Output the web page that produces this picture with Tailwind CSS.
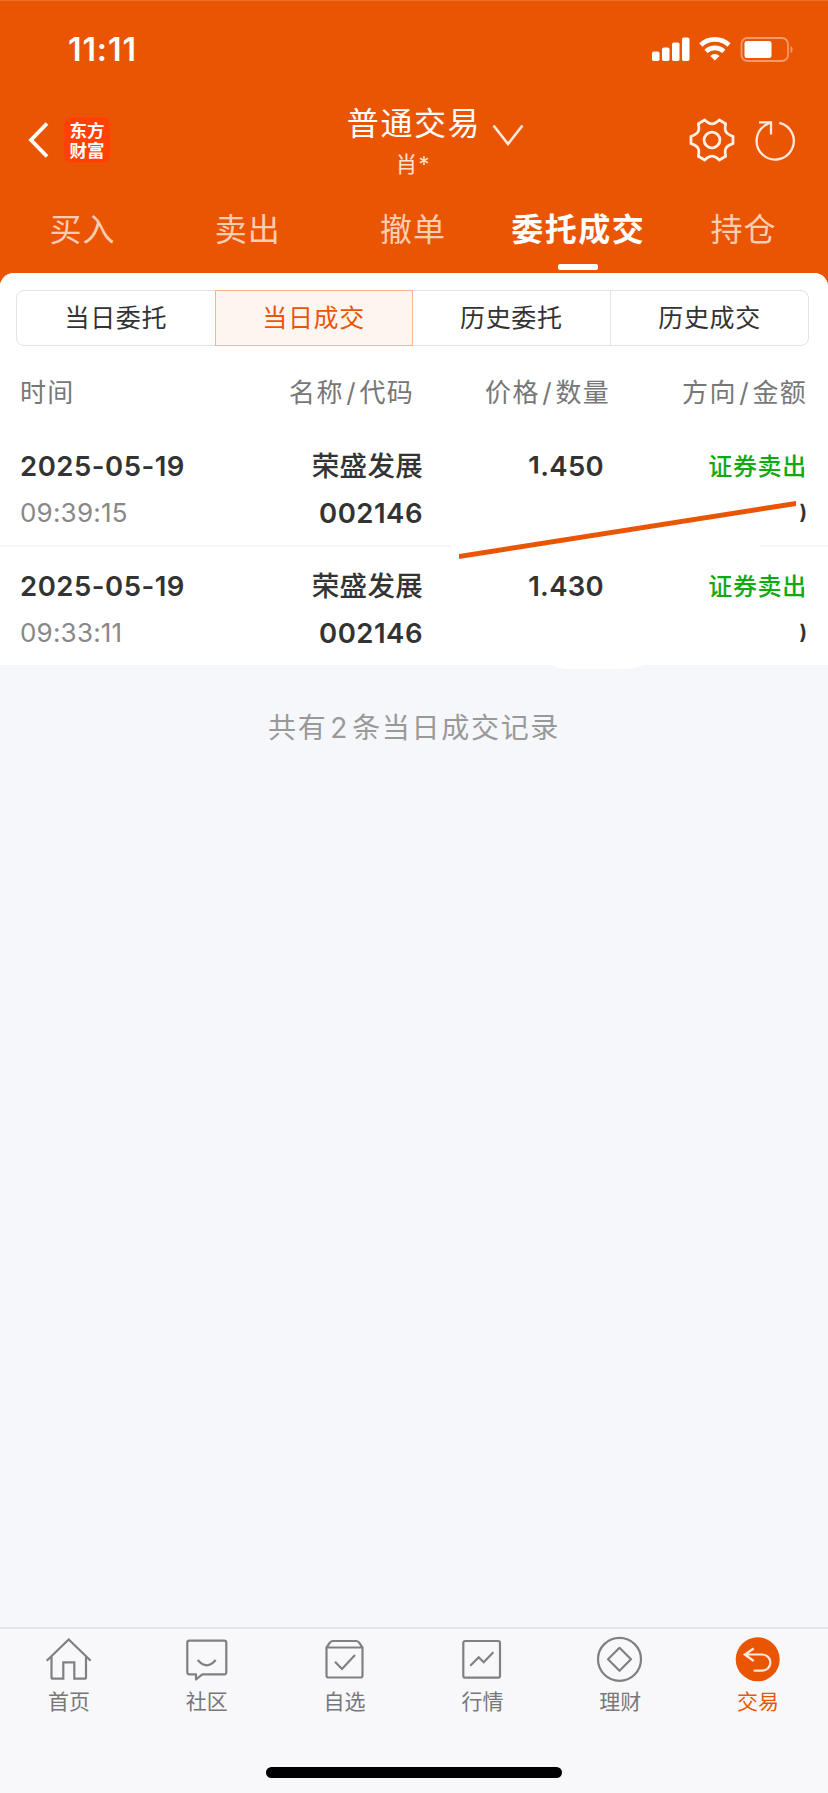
<!DOCTYPE html>
<html lang="zh-CN">
<head>
    <meta charset="UTF-8">
    <meta name="viewport" content="width=device-width, initial-scale=1.0">
    <title>普通交易 - 当日成交</title>
    <script src="https://cdn.jsdelivr.net/npm/@tailwindcss/browser@4"></script>
</head>
<body class="bg-[#ea5504] font-['Inter','Noto_Sans_CJK_SC',sans-serif]">
    <div id="app" class="relative flex flex-col w-[828px] h-[1793px] overflow-hidden leading-none whitespace-nowrap">

        <!-- Status bar -->
        <div class="flex items-center justify-between h-[98px] pl-[68px] pr-[34px] text-white shrink-0 border-t border-[#ee6e2a]">
            <span class="text-[32px] font-semibold tracking-[0.9px]">11:11</span>
            <svg class="w-[142px] h-[26px]" viewBox="0 0 142 26" fill="#fff">
                <rect x="0" y="14.500" width="7.500" height="9.500" rx="1.800"/>
                <rect x="10" y="10.500" width="7.500" height="13.500" rx="1.800"/>
                <rect x="20" y="5.500" width="7.500" height="18.500" rx="1.800"/>
                <rect x="30" y="0.500" width="7.500" height="23.500" rx="1.800"/>
                <g fill="none" stroke="#fff" stroke-width="4.600">
                    <path d="M48.800 8a20.500 20.500 0 0 1 28.200 0"/>
                    <path d="M54 14.400a13 13 0 0 1 17.800 0"/>
                </g>
                <path d="M58.300 19a6.500 6.500 0 0 1 9.200 0l-4.600 4.600z"/>
                <rect x="89.500" y="1" width="46.500" height="23" rx="6" fill="none" stroke="#f49a68" stroke-width="1.800"/>
                <rect x="92.500" y="4" width="27" height="17" rx="2.500"/>
                <path d="M138.500 9c2.800 1 2.800 6 0 7z" fill="#f49a68"/>
            </svg>
        </div>

        <!-- Title bar -->
        <div class="grid grid-cols-3 h-[92px] pl-[28px] pr-[30px] text-white shrink-0">
            <div class="flex items-center gap-[15px] pb-[8px]">
                <svg class="w-[21px] h-[38px]" viewBox="0 0 21 38" fill="none" stroke="#fff" stroke-width="3.800"><path d="M19 2.500 3 19 19 35.500"/></svg>
                <div class="flex items-center justify-center size-[46px] rounded-[8px] bg-[#ff4202] text-[17.500px] leading-[20px] font-bold font-['Noto_Sans_CJK_SC',sans-serif]">
                    <p>东方<br>财富</p>
                </div>
            </div>
            <div class="flex flex-col items-center pt-[4px]">
                <div class="flex items-center gap-[11px] pl-[45px]">
                    <span class="text-[32px] leading-[36px] tracking-[1.600px]">普通交易</span>
                    <svg class="w-[32px] h-[22px] mt-[22px]" viewBox="0 0 32 22" fill="none" stroke="#ffe9dc" stroke-width="2.600"><path d="M1.500 1.500 16 20 30.500 1.500"/></svg>
                </div>
                <span class="mt-[7px] text-[22px] text-[#ffe2d2] tracking-[1px]">肖*</span>
            </div>
            <div class="flex items-center justify-end gap-[16px] pb-[8px]">
                <svg class="size-[48px]" viewBox="-24 -24 48 48" fill="none" stroke="#ffefe5" stroke-width="2.800" stroke-linejoin="round">
                    <path d="M20.980 3.700C13.800 5.900 12 9 13.690 16.320L7.290 20.020C1.830 14.900-1.830 14.900-7.290 20.020L-13.690 16.320C-12 9-13.800 5.900-20.980 3.700V-3.700C-13.800-5.900-12-9-13.690-16.320L-7.290-20.020C-1.830-14.900 1.830-14.900 7.290-20.020L13.690-16.320C12-9 13.800-5.900 20.980-3.700Z"/>
                    <circle r="7.900"/>
                </svg>
                <svg class="size-[46px]" viewBox="0 0 46 46" fill="none" stroke="#ffe9dc" stroke-width="2.300">
                    <path d="M27.300 5.800A18.600 18.600 0 1 1 13 8.400L18.500 5.300"/>
                    <path d="M7 5.300h12V17.500"/>
                </svg>
            </div>
        </div>

        <!-- Trade tabs -->
        <div class="grid grid-cols-5 h-[83px] pt-[24px] pr-[2px] text-[32px] text-[#fbcdb2] text-center tracking-[1px] shrink-0">
            <span>买入</span>
            <span>卖出</span>
            <span>撤单</span>
            <div class="flex flex-col items-center text-white font-semibold">
                <span class="tracking-[1.500px]">委托成交</span>
                <div class="w-[40px] h-[6px] mt-[18px] rounded-[2px] bg-white"></div>
            </div>
            <span>持仓</span>
        </div>

        <!-- Content sheet -->
        <div class="flex flex-col grow rounded-t-[14px] bg-[#f6f7fa] overflow-hidden">
            <div class="bg-white h-[392px] shrink-0">
                <div class="pt-[17px] pl-[16px] pr-[19px]">
                    <div class="grid grid-cols-4 h-[56px] border border-[#e2e3ea] rounded-[8px] text-[25px] text-[#333] tracking-[0.700px]">
                        <div class="flex items-center justify-center">当日委托</div>
                        <div class="flex items-center justify-center -my-px border border-[#f2b597] bg-[#fef5f1] text-[#ea5504]">当日成交</div>
                        <div class="flex items-center justify-center">历史委托</div>
                        <div class="flex items-center justify-center border-l border-[#e2e3ea]">历史成交</div>
                    </div>
                </div>

                <div class="grid grid-cols-[394px_196px_197px] pl-[20px] pr-[20px] pt-[34px] h-[99px] text-[26px] text-[#777] tracking-[1.300px]">
                    <div class="flex justify-between"><span>时间</span><span>名称<span class="px-[2.500px]">/</span>代码</span></div>
                    <span class="text-right">价格<span class="px-[2.500px]">/</span>数量</span>
                    <span class="text-right">方向<span class="px-[2.500px]">/</span>金额</span>
                </div>

                <!-- Deal rows -->
                <div class="flex h-[102px] pl-[20px] pr-[21px] pt-[8px] border-b-2 border-[#f5f5f7] text-[27.500px] font-semibold text-[#333]">
                    <div class="flex flex-col w-[200px] gap-[19px]">
                        <span class="tracking-[0.500px]">2025-05-19</span>
                        <span class="text-[26px] font-normal text-[#888] tracking-[0.200px]">09:39:15</span>
                    </div>
                    <div class="flex flex-col items-end w-[203px] gap-[19px]">
                        <span class="font-medium tracking-[0.300px]">荣盛发展</span>
                        <span class="tracking-[0.500px]">002146</span>
                    </div>
                    <div class="w-[181px] text-right tracking-[0.300px]">1.450</div>
                    <div class="flex flex-col items-end grow gap-[19px]">
                        <span class="flex items-center h-[27px] text-[24px] font-medium text-[#12a812] tracking-[0.700px]">证券卖出</span>
                        <span class="text-[20px] leading-[27px] font-bold">)</span>
                    </div>
                </div>
                <div class="flex h-[118px] pl-[20px] pr-[21px] pt-[26px] text-[27.500px] font-semibold text-[#333]">
                    <div class="flex flex-col w-[200px] gap-[19px]">
                        <span class="tracking-[0.500px]">2025-05-19</span>
                        <span class="text-[26px] font-normal text-[#888] tracking-[0.200px]">09:33:11</span>
                    </div>
                    <div class="flex flex-col items-end w-[203px] gap-[19px]">
                        <span class="font-medium tracking-[0.300px]">荣盛发展</span>
                        <span class="tracking-[0.500px]">002146</span>
                    </div>
                    <div class="w-[181px] text-right tracking-[0.300px]">1.430</div>
                    <div class="flex flex-col items-end grow gap-[19px]">
                        <span class="flex items-center h-[27px] text-[24px] font-medium text-[#12a812] tracking-[0.700px]">证券卖出</span>
                        <span class="text-[20px] leading-[27px] font-bold">)</span>
                    </div>
                </div>
            </div>

            <p class="pt-[49px] text-center text-[28px] text-[#999] tracking-[1.700px]">共有<span class="px-[3px]">2</span>条当日成交记录</p>
        </div>

        <!-- Bottom navigation -->
        <div class="h-[166px] shrink-0 bg-[#f8f8fb] border-t-2 border-[#e5e5ec]">
            <div class="grid grid-cols-6 h-[138px] pt-[6px] pr-[1px] text-[21px] text-[#777]">
                <div class="flex flex-col items-center gap-[8px]">
                    <svg class="size-[48px]" viewBox="0 0 48 48" fill="none" stroke="#808080" stroke-width="2.200"><path d="M1.700 25.700 23.700 4.500 45.700 25.700M6.500 21.500V42.200q0 1.500 1.500 1.500H18.300V27.300H29.300V43.700H39.500q1.500 0 1.500-1.500V21.500"/></svg>
                    <span>首页</span>
                </div>
                <div class="flex flex-col items-center gap-[8px]">
                    <svg class="size-[48px]" viewBox="0 0 48 48" fill="none" stroke="#808080" stroke-width="2.200" stroke-linejoin="round"><path d="M6.300 5.700H41.300q2 0 2 2V37.300q0 2-2 2H19.300L13 44.500V39.300H6.300q-2 0-2-2V7.700q0-2 2-2ZM14.700 25Q23.700 35.600 32.700 25"/></svg>
                    <span>社区</span>
                </div>
                <div class="flex flex-col items-center gap-[8px]">
                    <svg class="size-[48px]" viewBox="0 0 48 48" fill="none" stroke="#808080" stroke-width="2.200"><path d="M5.500 12.500 9 7.500Q10 6 12 6H35Q37 6 38 7.500L41.500 12.500V40.500q0 2-2 2H7.500q-2 0-2-2ZM5.500 12.500H41.500M14 26.700 21 34 34 20"/></svg>
                    <span>自选</span>
                </div>
                <div class="flex flex-col items-center gap-[8px]">
                    <svg class="size-[48px]" viewBox="0 0 48 48" fill="none" stroke="#808080" stroke-width="2.200"><rect x="5.300" y="6" width="36.700" height="36.700" rx="2"/><path d="M12.300 30.700 20.700 22.300 25.700 27.300 35.300 17.300"/></svg>
                    <span>行情</span>
                </div>
                <div class="flex flex-col items-center gap-[8px]">
                    <svg class="size-[48px]" viewBox="0 0 48 48" fill="none" stroke="#808080" stroke-width="2.200" stroke-linejoin="round"><circle cx="23.500" cy="24.300" r="21.500"/><path d="M23.500 12.800 35 24.300 23.500 35.800 12 24.300Z"/></svg>
                    <span>理财</span>
                </div>
                <div class="flex flex-col items-center gap-[8px] text-[#ea5504]">
                    <svg class="size-[48px]" viewBox="0 0 48 48" fill="none" stroke="#ffe9dc" stroke-width="2.200"><circle cx="23.700" cy="24.300" r="22" fill="#ea5504" stroke="none"/><path d="M19.700 13.500 10.800 19.500 19.700 26M10.800 19.500H28.300a8.100 8.100 0 0 1 0 16.200H19.700"/></svg>
                    <span>交易</span>
                </div>
            </div>
            <div class="w-[296px] h-[11px] mx-auto rounded-full bg-black"></div>
        </div>

        <!-- Masked amounts and marker stroke over the rows -->
        <svg class="absolute left-0 top-[450px] w-[828px] h-[230px]" viewBox="0 450 828 230">
            <path fill="#fff" d="M450 541H760V549H450ZM528 473.500H540V480H528ZM549 664H647Q635 669 620 669H566Q556 668 549 664Z"/>
            <path fill="#ea5504" d="M459 554 796 501V506L459 559Z"/>
        </svg>
    </div>
</body>
</html>
